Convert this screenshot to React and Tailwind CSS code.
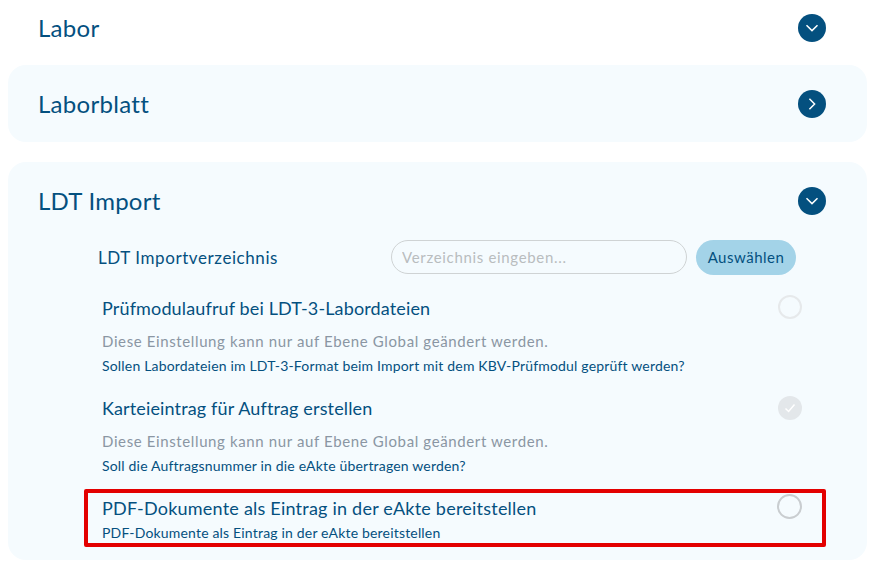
import React from "react";

const font = "font-['Lato','Noto_Sans',sans-serif]";

function RoundChevron({ open }) {
  return (
    <div className="w-7 h-7 rounded-full bg-[#04507f] flex items-center justify-center shrink-0">
      <svg width="14" height="14" viewBox="0 0 14 14" fill="none" stroke="#fff" strokeWidth="1.5">
        {open ? <path d="M1.5 4.2 7 9.6l5.5-5.4" /> : <path d="M4.4 1.8 9.6 7l-5.2 5.2" />}
      </svg>
    </div>
  );
}

function Check({ checked, strong }) {
  if (checked) {
    return (
      <div className="w-6 h-6 rounded-full bg-[#e3e7ea] flex items-center justify-center">
        <svg width="14" height="14" viewBox="0 0 14 14" fill="none" stroke="#fff" strokeWidth="1.5">
          <path d="M2.5 7.5 5.6 10.5 11.5 3.6" />
        </svg>
      </div>
    );
  }
  if (strong) {
    return <div className="w-[25px] h-[25px] mb-[4px] rounded-full border-2 border-[#c9cdd0]" />;
  }
  return <div className="w-6 h-6 mb-[2px] rounded-full border-2 border-[#e6e9eb]" />;
}

function Setting({ title, hint, question, checked }) {
  return (
    <div className="pl-[94px] pr-[65px]">
      <div className="flex items-center justify-between h-6">
        <span className="text-[18px] tracking-[0.14px] text-[#04507f]">{title}</span>
        <Check checked={checked} />
      </div>
      <p className="mt-[11px] text-[15px] leading-5 tracking-[0.62px] text-[#8a96a3]">{hint}</p>
      <p className="mt-[5px] text-[14px] leading-5 tracking-[0.18px] text-[#04507f]">{question}</p>
    </div>
  );
}

export default function App() {
  return (
    <div className={`${font} w-[875px] h-[565px] overflow-hidden bg-white px-2 text-[#04507f]`}>
      <div className="h-[55px] mb-[10px] flex items-center justify-between pl-[30px] pr-[41px]">
        <span className="text-[24px] tracking-[0.3px]">Labor</span>
        <RoundChevron open />
      </div>

      <div className="h-[77px] mb-[20px] rounded-[18px] bg-[#f5fbfe] flex items-center justify-between pl-[30px] pr-[41px]">
        <span className="text-[24px] tracking-[0.3px]">Laborblatt</span>
        <RoundChevron />
      </div>

      <div className="h-[398px] rounded-[18px] bg-[#f5fbfe] pt-[25px]">
        <div className="flex items-center justify-between h-7 pl-[30px] pr-[41px]">
          <span className="text-[24px] tracking-[0.25px]">LDT Import</span>
          <RoundChevron open />
        </div>

        <div className="mt-[24px] h-[36px] flex items-center pl-[90px]">
          <span className="w-[293px] pt-[1px] text-[17px] tracking-[0.58px]">LDT Importverzeichnis</span>
          <input
            readOnly
            placeholder="Verzeichnis eingeben..."
            className="w-[296px] h-[34px] rounded-full border border-[#cfd3d4] bg-transparent px-[10px] text-[15px] tracking-[0.67px] placeholder:text-[#b9bdbe] outline-none"
          />
          <button className="ml-[9px] w-[100px] h-[35px] rounded-full bg-[#a3d3e8] text-[15px] tracking-[0.5px] text-[#04507f]">
            Auswählen
          </button>
        </div>

        <div className="mt-[21px] flex flex-col gap-[20px] pb-[13px]">
          <Setting
            title="Prüfmodulaufruf bei LDT-3-Labordateien"
            hint="Diese Einstellung kann nur auf Ebene Global geändert werden."
            question="Sollen Labordateien im LDT-3-Format beim Import mit dem KBV-Prüfmodul geprüft werden?"
          />
          <Setting
            title="Karteieintrag für Auftrag erstellen"
            hint="Diese Einstellung kann nur auf Ebene Global geändert werden."
            question="Soll die Auftragsnummer in die eAkte übertragen werden?"
            checked
          />
        </div>

        <div className="ml-[76px] w-[742px] h-[58px] border-4 border-[#e30000] rounded-[2px] pl-[14px] pr-[20px]">
          <div className="flex items-center justify-between h-6 mt-[3px]">
            <span className="text-[18px] tracking-[0.22px]">PDF-Dokumente als Eintrag in der eAkte bereitstellen</span>
            <Check strong />
          </div>
          <p className="text-[14px] leading-5 tracking-[0.18px] mt-[3px]">PDF-Dokumente als Eintrag in der eAkte bereitstellen</p>
        </div>
      </div>
    </div>
  );
}
